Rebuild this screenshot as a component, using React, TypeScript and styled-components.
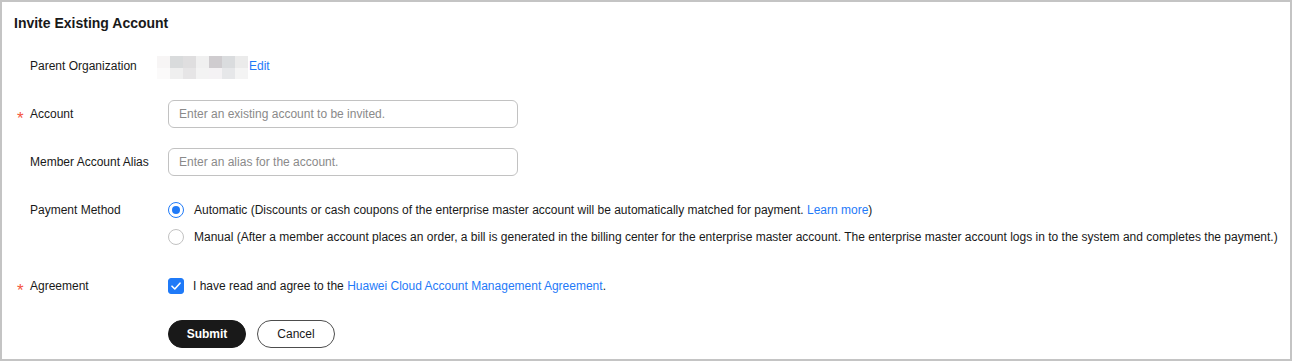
import React, { useState } from 'react';
import styled, { createGlobalStyle } from 'styled-components';

const GlobalStyle = createGlobalStyle`
  html, body {
    margin: 0;
    padding: 0;
    background: #ffffff;
  }
  * {
    box-sizing: border-box;
  }
`;

const BLUE = '#1f7af8';

const Frame = styled.div`
  width: 1292px;
  height: 361px;
  border: 2px solid #c4c4c4;
  background: #ffffff;
  font-family: 'Liberation Sans', Arial, sans-serif;
  font-size: 12px;
  color: #191919;
  padding: 11px 0 0 12px;
`;

const Title = styled.h3`
  margin: 0;
  font-size: 14px;
  line-height: 20px;
  font-weight: 700;
  color: #191919;
`;

const Form = styled.div`
  display: flex;
  flex-direction: column;
  gap: 20px;
  margin-top: 19px;
`;

const Row = styled.div<{ $extraTop?: number }>`
  display: flex;
  align-items: flex-start;
  margin-top: ${({ $extraTop }) => ($extraTop ? `${$extraTop}px` : '0')};
`;

const Label = styled.div`
  width: 154px;
  flex-shrink: 0;
  display: flex;
  align-items: center;
  height: 28px;
  padding-left: 2px;
`;

const Required = styled.span<{ $show: boolean }>`
  width: 14px;
  color: #f4553f;
  font-size: 17px;
  line-height: 1;
  visibility: ${({ $show }) => ($show ? 'visible' : 'hidden')};
  position: relative;
  top: 4px;
  left: 1px;
`;

const Control = styled.div`
  display: flex;
  flex-direction: column;
`;

const Inline = styled.div`
  display: flex;
  align-items: center;
  height: 28px;
`;

const Blur = styled.div`
  display: grid;
  grid-template-columns: repeat(7, 13px);
  grid-template-rows: 12px 11px;
  margin-left: -11px;
  margin-right: 1px;
  margin-top: 2px;
`;

const Pixel = styled.span<{ $c: string }>`
  background: ${({ $c }) => $c};
`;

const Link = styled.a`
  color: ${BLUE};
  text-decoration: none;
  cursor: pointer;
`;

const Input = styled.input`
  width: 350px;
  height: 28px;
  border: 1px solid #c2c2c2;
  border-radius: 6px;
  padding: 0 10px;
  font-family: inherit;
  font-size: 12px;
  color: #191919;
  outline: none;

  &::placeholder {
    color: #8a8a8a;
  }
`;

const RadioLine = styled.label`
  display: flex;
  align-items: center;
  height: 27px;
  gap: 10px;
  cursor: pointer;
  white-space: nowrap;
`;

const RadioDot = styled.span<{ $checked: boolean }>`
  width: 16px;
  height: 16px;
  border-radius: 50%;
  border: 1px solid ${({ $checked }) => ($checked ? BLUE : '#c2c2c2')};
  display: flex;
  align-items: center;
  justify-content: center;
  flex-shrink: 0;

  &::after {
    content: '';
    width: 8px;
    height: 8px;
    border-radius: 50%;
    background: ${BLUE};
    display: ${({ $checked }) => ($checked ? 'block' : 'none')};
  }
`;

const CheckLine = styled.label`
  display: flex;
  align-items: center;
  height: 28px;
  gap: 9px;
  cursor: pointer;
`;

const CheckBox = styled.span<{ $checked: boolean }>`
  width: 16px;
  height: 16px;
  border-radius: 3px;
  background: ${({ $checked }) => ($checked ? BLUE : '#fff')};
  border: 1px solid ${({ $checked }) => ($checked ? BLUE : '#c2c2c2')};
  display: flex;
  align-items: center;
  justify-content: center;
`;

const Buttons = styled.div`
  display: flex;
  gap: 11px;
`;

const Button = styled.button<{ $primary?: boolean }>`
  width: 78px;
  height: 28px;
  border-radius: 14px;
  font-family: inherit;
  font-size: 12px;
  cursor: pointer;
  background: ${({ $primary }) => ($primary ? '#191919' : '#ffffff')};
  color: ${({ $primary }) => ($primary ? '#ffffff' : '#191919')};
  border: 1px solid ${({ $primary }) => ($primary ? '#191919' : '#4d4d4d')};
  font-weight: ${({ $primary }) => ($primary ? 700 : 400)};
`;

const blurColors = [
  '#f7f5f5', '#d9dbdc', '#dfdedf', '#f0f0f0', '#cfcccf', '#dadcde', '#ebebeb',
  '#fbfafa', '#efefef', '#e6e5e6', '#f3f3f3', '#f4f2f4', '#e6e7e9', '#f4f4f4',
];

const FieldLabel: React.FC<{ required?: boolean; children?: React.ReactNode }> = ({ required, children }) => (
  <Label>
    <Required $show={!!required}>*</Required>
    {children}
  </Label>
);

export default function App() {
  const [payment, setPayment] = useState<'auto' | 'manual'>('auto');
  const [agreed, setAgreed] = useState(true);

  return (
    <>
      <GlobalStyle />
      <Frame>
        <Title>Invite Existing Account</Title>
        <Form>
          <Row>
            <FieldLabel>Parent Organization</FieldLabel>
            <Inline>
              <Blur>
                {blurColors.map((c, i) => (
                  <Pixel key={i} $c={c} />
                ))}
              </Blur>
              <Link>Edit</Link>
            </Inline>
          </Row>
          <Row>
            <FieldLabel required>Account</FieldLabel>
            <Input placeholder="Enter an existing account to be invited." />
          </Row>
          <Row>
            <FieldLabel>Member Account Alias</FieldLabel>
            <Input placeholder="Enter an alias for the account." />
          </Row>
          <Row>
            <FieldLabel>Payment Method</FieldLabel>
            <Control>
              <RadioLine onClick={() => setPayment('auto')}>
                <RadioDot $checked={payment === 'auto'} />
                <span>
                  Automatic (Discounts or cash coupons of the enterprise master account will be automatically matched for payment.{' '}
                  <Link>Learn more</Link>)
                </span>
              </RadioLine>
              <RadioLine onClick={() => setPayment('manual')}>
                <RadioDot $checked={payment === 'manual'} />
                <span>
                  Manual (After a member account places an order, a bill is generated in the billing center for the enterprise master account. The enterprise master account logs in to the system and completes the payment.)
                </span>
              </RadioLine>
            </Control>
          </Row>
          <Row $extraTop={2}>
            <FieldLabel required>Agreement</FieldLabel>
            <CheckLine onClick={() => setAgreed(!agreed)}>
              <CheckBox $checked={agreed}>
                {agreed && (
                  <svg width="10" height="8" viewBox="0 0 10 8" fill="none">
                    <path d="M1 4.2L3.8 7L9 1.2" stroke="#fff" strokeWidth="1.6" strokeLinecap="round" strokeLinejoin="round" />
                  </svg>
                )}
              </CheckBox>
              <span>
                I have read and agree to the <Link>Huawei Cloud Account Management Agreement</Link>.
              </span>
            </CheckLine>
          </Row>
          <Row>
            <FieldLabel />
            <Buttons>
              <Button $primary>Submit</Button>
              <Button>Cancel</Button>
            </Buttons>
          </Row>
        </Form>
      </Frame>
    </>
  );
}
